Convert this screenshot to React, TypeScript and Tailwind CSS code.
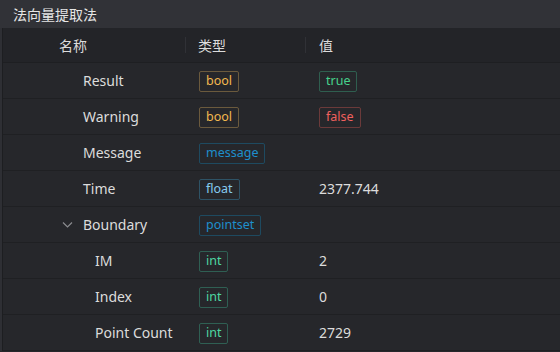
import React from "react";

type Tone = "amber" | "green" | "red" | "blue" | "sky" | "teal";

const toneCls: Record<Tone, string> = {
  amber: "border-[#6b5a3d] text-[#f2b84f]",
  green: "border-[#2f5e4f] text-[#47d18c]",
  red: "border-[#6b3a3a] text-[#f0605e]",
  blue: "border-[#1e4a60] text-[#1e8fcc]",
  sky: "border-[#2e5366] text-[#86cbef]",
  teal: "border-[#2f5f53] text-[#4fd7a2]",
};

function Badge({ text, tone }: { text: string; tone: Tone }) {
  return (
    <span
      className={`inline-flex h-[21px] items-center rounded-[2px] border px-[6px] text-[12.5px] leading-none ${toneCls[tone]}`}
    >
      {text}
    </span>
  );
}

type Row = {
  name: string;
  indent: number;
  chevron?: boolean;
  type: [string, Tone];
  value?: string | [string, Tone];
};

const rows: Row[] = [
  { name: "Result", indent: 83, type: ["bool", "amber"], value: ["true", "green"] },
  { name: "Warning", indent: 83, type: ["bool", "amber"], value: ["false", "red"] },
  { name: "Message", indent: 83, type: ["message", "blue"] },
  { name: "Time", indent: 83, type: ["float", "sky"], value: "2377.744" },
  { name: "Boundary", indent: 83, chevron: true, type: ["pointset", "blue"] },
  { name: "IM", indent: 95, type: ["int", "teal"], value: "2" },
  { name: "Index", indent: 95, type: ["int", "teal"], value: "0" },
  { name: "Point Count", indent: 95, type: ["int", "teal"], value: "2729" },
];

export default function App() {
  return (
    <div
      className="h-[352px] w-[560px] overflow-hidden bg-[#26272b] text-[14px] text-[#dcdcdc]"
      style={{ fontFamily: '"Noto Sans", "Noto Sans CJK SC", sans-serif' }}
    >
      <div className="flex h-[28px] items-center bg-[#313237] pl-[13px] text-[#e6e6e6]">
        法向量提取法
      </div>
      <div className="flex">
        <div className="w-[2px] shrink-0 bg-[#2e2f34]" />
        <div className="w-px shrink-0 bg-[#1d1e21]" />
        <div className="flex-1">
          <div className="grid h-[35px] grid-cols-[182px_120px_1fr] items-center border-b border-[#1e1f22] bg-[#232428]">
            <div className="pl-[56px]">名称</div>
            <div className="flex items-center">
              <div className="h-[16px] w-px bg-[#303136]" />
              <span className="pl-[12px]">类型</span>
            </div>
            <div className="flex items-center">
              <div className="h-[16px] w-px bg-[#303136]" />
              <span className="pl-[13px]">值</span>
            </div>
          </div>
          {rows.map((r) => (
            <div
              key={r.name}
              className="grid h-[36px] grid-cols-[182px_120px_1fr] items-center border-b border-[#1f2023]"
            >
              <div className="relative flex items-center" style={{ paddingLeft: r.indent - 3 }}>
                {r.chevron && (
                  <svg
                    className="absolute left-[59px] top-1/2 -translate-y-1/2"
                    width="11"
                    height="7"
                    viewBox="0 0 11 7"
                    fill="none"
                    stroke="#8a8b8f"
                    strokeWidth="1.2"
                  >
                    <path d="M1 1l4.5 4.5L10 1" />
                  </svg>
                )}
                {r.name}
              </div>
              <div className="pl-[14px]">
                <Badge text={r.type[0]} tone={r.type[1]} />
              </div>
              <div className="pl-[14px]">
                {typeof r.value === "string" ? (
                  <span>{r.value}</span>
                ) : r.value ? (
                  <Badge text={r.value[0]} tone={r.value[1]} />
                ) : null}
              </div>
            </div>
          ))}
        </div>
      </div>
    </div>
  );
}
